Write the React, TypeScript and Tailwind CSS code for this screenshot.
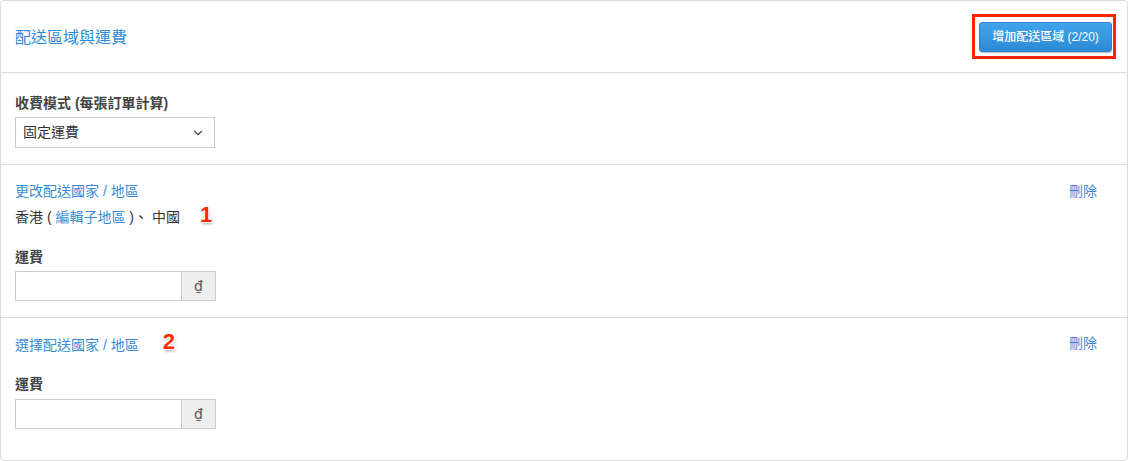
import { ChevronDown } from "lucide-react"

const font = { fontFamily: '"Liberation Sans", "Noto Sans CJK TC", sans-serif' }

function Badge({ n }: { n: string }) {
  return (
    <span className="text-[22px] leading-none font-bold text-[#ff2a00] [text-shadow:0_0_1px_#fff,1px_1px_0_#fff,-1px_-1px_0_#fff,1px_-1px_0_#fff,-1px_1px_0_#fff,1px_2px_3px_rgba(0,0,0,0.35)]">
      {n}
    </span>
  )
}

function FeeInput() {
  return (
    <div className="flex h-[30px] w-[201px]">
      <input className="h-full w-[167px] border border-[#ccc] bg-white px-2 text-[14px] outline-none" />
      <div className="flex h-full w-[34px] items-center justify-center border border-l-0 border-[#ccc] bg-[#eee] font-['DejaVu_Sans'] text-[14px] text-[#555]">
        ₫
      </div>
    </div>
  )
}

export default function App() {
  return (
    <div className="h-[461px] w-[1129px] bg-white" style={font}>
      <div className="h-[461px] w-[1128px] rounded-[4px] border border-[#dcdcdc] bg-white">
        <div className="flex h-[72px] items-center justify-between border-b border-[#dcdcdc] pl-[14px] pr-[11px]">
          <h2 className="mt-[3px] text-[16px] text-[#2f8bd6]">配送區域與運費</h2>
          <div className="border-[3px] border-[#ff2200] pb-[4px] pl-[4px] pr-[1px] pt-[5px]">
            <button className="h-[30px] w-[133px] rounded-[3px] border border-[#2b83c9] bg-gradient-to-b from-[#41a4eb] to-[#2d8ad4] text-[12px] font-medium text-white shadow-[0_1px_1px_rgba(0,0,0,0.25)]">
              增加配送區域 (2/20)
            </button>
          </div>
        </div>

        <div className="border-b border-[#dcdcdc] px-[14px] pb-[16px] pt-[21px]">
          <div className="text-[14px] font-bold leading-[18px] text-[#444]">收費模式 (每張訂單計算)</div>
          <div className="mt-[5px] flex h-[31px] w-[200px] items-center justify-between border border-[#ccc] pl-[7px] pr-[9px] text-[14px] text-[#333]">
            <span>固定運費</span>
            <ChevronDown className="size-[14px] text-[#444]" strokeWidth={2} />
          </div>
        </div>

        <div className="flex justify-between border-b border-[#dcdcdc] pb-[16px] pl-[14px] pr-[30px] pt-[16px]">
          <div>
            <a className="block text-[14px] leading-[20px] text-[#3b8bd3]">更改配送國家 / 地區</a>
            <div className="mt-[6px] flex items-center text-[14px] leading-[20px] text-[#333]">
              <span>
                香港 ( <a className="text-[#3b8bd3]">編輯子地區</a> )、 中國
              </span>
              <span className="ml-[20px] mt-[-4px]">
                <Badge n="1" />
              </span>
            </div>
            <div className="mt-[21px] text-[14px] font-bold leading-[18px] text-[#444]">運費</div>
            <div className="mt-[5px]">
              <FeeInput />
            </div>
          </div>
          <a className="text-[14px] leading-[20px] text-[#3b8bd3]">刪除</a>
        </div>

        <div className="flex justify-between pb-[30px] pl-[14px] pr-[30px] pt-[15px]">
          <div>
            <div className="flex items-center">
              <a className="text-[14px] leading-[20px] text-[#3b8bd3]">選擇配送國家 / 地區</a>
              <span className="ml-[24px] mt-[-2px]">
                <Badge n="2" />
              </span>
            </div>
            <div className="mt-[19px] text-[14px] font-bold leading-[18px] text-[#444]">運費</div>
            <div className="mt-[6px]">
              <FeeInput />
            </div>
          </div>
          <a className="text-[14px] leading-[20px] text-[#3b8bd3]">刪除</a>
        </div>
      </div>
    </div>
  )
}
